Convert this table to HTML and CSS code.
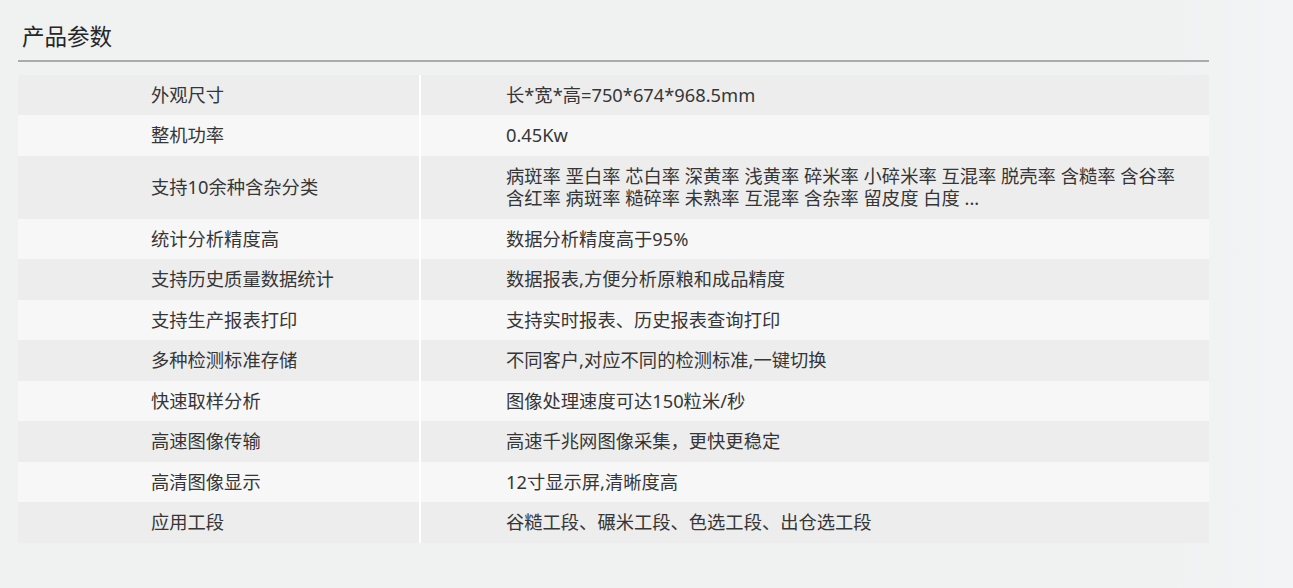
FILE: index.html
```html
<!DOCTYPE html>
<html lang="zh-CN">
<head>
<meta charset="utf-8">
<title>产品参数</title>
<link rel="stylesheet" href="styles.css">
</head>
<body>
<section class="params">
  <h2 class="params-title">产品参数</h2>
  <div class="spec-table">
    <div class="spec-row"><div class="spec-name">外观尺寸</div><div class="spec-value">长*宽*高=750*674*968.5mm</div></div>
    <div class="spec-row"><div class="spec-name">整机功率</div><div class="spec-value">0.45Kw</div></div>
    <div class="spec-row"><div class="spec-name">支持10余种含杂分类</div><div class="spec-value spec-wrap">病斑率 垩白率 芯白率 深黄率 浅黄率 碎米率 小碎米率 互混率 脱壳率 含糙率 含谷率 含红率 病斑率 糙碎率 未熟率 互混率 含杂率 留皮度 白度 ...</div></div>
    <div class="spec-row"><div class="spec-name">统计分析精度高</div><div class="spec-value">数据分析精度高于95%</div></div>
    <div class="spec-row"><div class="spec-name">支持历史质量数据统计</div><div class="spec-value">数据报表,方便分析原粮和成品精度</div></div>
    <div class="spec-row"><div class="spec-name">支持生产报表打印</div><div class="spec-value">支持实时报表、历史报表查询打印</div></div>
    <div class="spec-row"><div class="spec-name">多种检测标准存储</div><div class="spec-value">不同客户,对应不同的检测标准,一键切换</div></div>
    <div class="spec-row"><div class="spec-name">快速取样分析</div><div class="spec-value">图像处理速度可达150粒米/秒</div></div>
    <div class="spec-row"><div class="spec-name">高速图像传输</div><div class="spec-value">高速千兆网图像采集，更快更稳定</div></div>
    <div class="spec-row"><div class="spec-name">高清图像显示</div><div class="spec-value">12寸显示屏,清晰度高</div></div>
    <div class="spec-row"><div class="spec-name">应用工段</div><div class="spec-value">谷糙工段、碾米工段、色选工段、出仓选工段</div></div>
  </div>
</section>
</body>
</html>
```

FILE: styles.css
```css
* {
  box-sizing: border-box;
}

html, body {
  margin: 0;
  padding: 0;
}

body {
  background: linear-gradient(90deg, #f0f1f1 0%, #f0f1f1 90%, #f3f4f5 100%);
  font-family: "Noto Sans", "Noto Sans CJK SC", sans-serif;
  color: #363636;
  height: 588px;
  overflow: hidden;
}

.params {
  width: 1191px;
  margin-left: 18px;
  padding-top: 21px;
}

.params-title {
  margin: 0;
  padding: 0 0 7px 4px;
  font-size: 22.5px;
  line-height: 32px;
  font-weight: 400;
  color: #262626;
  border-bottom: 2px solid #ababab;
}

.spec-table {
  margin-top: 12.5px;
  display: flex;
  flex-direction: column;
}

.spec-row {
  display: grid;
  grid-template-columns: 403px 1fr;
  background: #ededed;
  font-size: 18.3px;
  line-height: 22.5px;
}

.spec-row:nth-child(even) {
  background: #f7f7f7;
}

.spec-name {
  padding: 9px 0 9px 133px;
  border-right: 2px solid #ffffff;
  display: flex;
  align-items: center;
}

.spec-value {
  padding: 9px 24px 9px 85px;
  display: flex;
  align-items: center;
}

.spec-wrap {
  display: block;
  word-break: keep-all;
}
```
